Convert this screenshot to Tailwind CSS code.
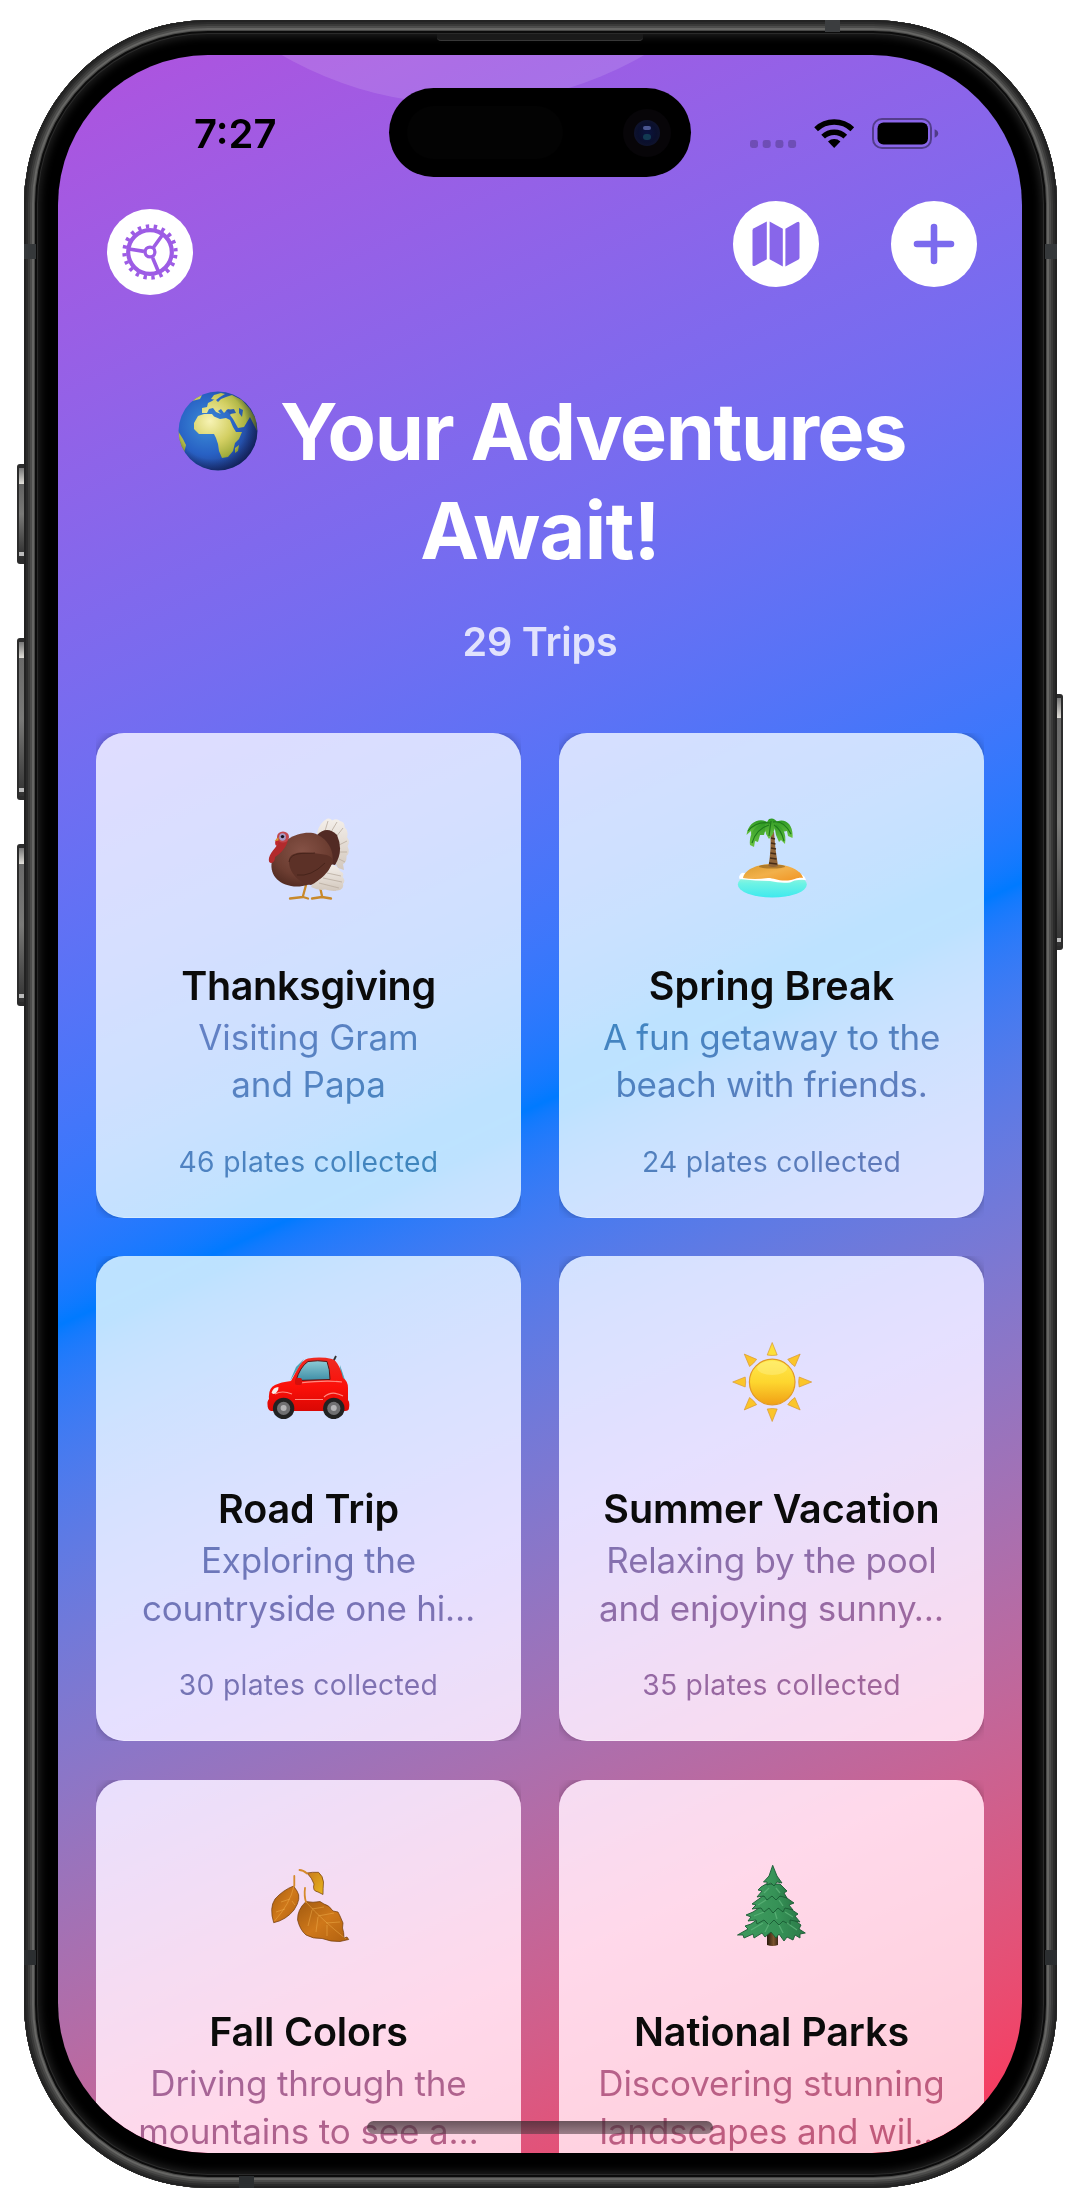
<!DOCTYPE html>
<html lang="en">
<head>
<meta charset="utf-8">
<title>Your Adventures Await!</title>
<script src="https://cdn.jsdelivr.net/npm/@tailwindcss/browser@4"></script>
</head>
<body class="bg-white font-['Inter',sans-serif] w-[1080px] h-[2208px] overflow-hidden">
<div class="relative ml-[24px] pt-[20px] w-[1033px]">

  <!-- side buttons -->
  <div class="absolute -left-[7px] top-[464px] w-[10px] h-[100px] rounded-l-[3px] bg-linear-to-b from-[#555] via-[#7a7a78] to-[#2a2a2a] border-l-2 border-y-4 border-[#2c2c2c]"><div class="h-4 w-[5px] bg-linear-to-b from-[#777] to-[#e2e0da]"></div><div class="mt-[68px] h-1 w-[5px] bg-[#bbb]"></div></div>
  <div class="absolute -left-[7px] top-[638px] w-[10px] h-[162px] rounded-l-[3px] bg-linear-to-b from-[#666] via-[#7a7a78] to-[#333] border-l-2 border-y-4 border-[#2c2c2c]"><div class="h-4 w-[5px] bg-linear-to-b from-[#777] to-[#e2e0da]"></div><div class="mt-[130px] h-1 w-[5px] bg-[#bbb]"></div></div>
  <div class="absolute -left-[7px] top-[844px] w-[10px] h-[162px] rounded-l-[3px] bg-linear-to-b from-[#666] via-[#7a7a78] to-[#333] border-l-2 border-y-4 border-[#2c2c2c]"><div class="h-4 w-[5px] bg-linear-to-b from-[#777] to-[#e2e0da]"></div><div class="mt-[130px] h-1 w-[5px] bg-[#bbb]"></div></div>
  <div class="absolute -right-[6px] top-[694px] w-[9px] h-[256px] rounded-r-[3px] bg-linear-to-b from-[#666] via-[#7a7a78] to-[#333] border-r-2 border-y-4 border-[#2c2c2c]"><div class="h-5 w-[5px] ml-[2px] bg-linear-to-b from-[#777] to-[#e2e0da]"></div><div class="mt-[220px] h-1 w-[5px] ml-[2px] bg-[#bbb]"></div></div>

  <!-- body -->
  <div class="relative w-[1033px] h-[2168px] rounded-[184px] bg-black pt-[35px] pl-[34px] shadow-[inset_0_0_0_2px_#222,inset_0_0_0_4px_#2b2b2b,inset_0_0_0_6px_#3a3a39,inset_0_0_0_8px_#4c4c4b,inset_0_0_0_10px_#666664,inset_0_0_0_11px_#484847,inset_0_0_0_13px_#0c0c0c,inset_0_0_0_14px_#2a2a2a,inset_0_0_8px_16px_#222]">
    <div class="absolute left-[801px] top-0 w-[15px] h-[12px] bg-[#3b3d3f]"></div>
    <div class="absolute left-[215px] bottom-0 w-[15px] h-[12px] bg-[#2b2e30]"></div>
    <div class="absolute left-0 top-[224px] w-[12px] h-[15px] bg-[#35383a]"></div>
    <div class="absolute right-0 top-[224px] w-[12px] h-[15px] bg-[#35383a]"></div>
    <div class="absolute left-0 top-[1930px] w-[12px] h-[15px] bg-[#2b2e30]"></div>
    <div class="absolute right-0 top-[1930px] w-[12px] h-[15px] bg-[#2b2e30]"></div>
    <div class="absolute left-[413px] top-[14px] w-[206px] h-[7px] rounded-b-[4px] bg-[#1a1a1a] border-b border-[#383838]"></div>

    <!-- screen -->
    <div class="relative w-[964px] h-[2098px] rounded-[150px] overflow-hidden bg-[linear-gradient(155.3deg_in_oklab,#af52de_0%,#007aff_50%,#ff2d55_100%)]">
      <div class="absolute left-[45px] -top-[671px] size-[720px] rounded-full bg-white/12"></div>

      <!-- Dynamic Island -->
      <div class="absolute left-[331px] top-[33px] w-[302px] h-[89px] rounded-full bg-black flex items-center justify-between pl-[18px] pr-[20px]">
        <div class="w-[156px] h-[53px] rounded-full bg-[#030303]"></div>
        <div class="size-[48px] rounded-full bg-[#070508] flex items-center justify-center">
          <div class="size-[26px] rounded-full bg-[radial-gradient(circle,#0b1440_0%,#0a0f2c_50%,#14182e_100%)] flex flex-col items-center justify-center gap-1"><div class="w-[8px] h-[4px] rounded-full bg-[#4a5690]"></div><div class="w-[8px] h-[6px] rounded-full bg-[#123a52]"></div></div>
        </div>
      </div>

      <!-- status bar -->
      <div class="relative flex justify-between items-start pt-[54px] h-[146px] pl-[136px] pr-[83px]">
        <div class="text-[40px] leading-[50px] font-semibold text-black">7:27</div>
        <svg class="mt-[9px]" width="189" height="31" viewBox="0 0 189 31">
          <g fill="#000" fill-opacity=".22"><rect x="0" y="22" width="8" height="8" rx="2.4"/><rect x="12.7" y="22" width="8" height="8" rx="2.4"/><rect x="25.4" y="22" width="8" height="8" rx="2.4"/><rect x="38.1" y="22" width="8" height="8" rx="2.4"/></g>
          <g transform="translate(64.2 0)"><path d="M20 30 13.8 23.6a9 9 0 0 1 12.4 0z"/><path fill="none" stroke="#000" stroke-width="5.4" d="M8.9 18.6a16.2 16.2 0 0 1 22.2 0M1.9 11.2a26.4 26.4 0 0 1 36.2 0"/></g>
          <rect x="123" y="1" width="58" height="29" rx="9" fill="none" stroke="#000" stroke-opacity=".4" stroke-width="2"/>
          <rect x="127.500" y="4.500" width="50.500" height="22" rx="6" fill="#000"/>
          <path d="M184.600 11.300c2 .6 3.600 2.200 3.600 4.200s-1.600 3.600-3.600 4.200z" fill="#000" fill-opacity=".42"/>
        </svg>
      </div>

      <!-- toolbar -->
      <div class="relative flex items-start h-[181px] pl-[49px] pr-[45px]">
        <button class="mt-[8px] size-[86px] rounded-full bg-white flex items-center justify-center">
          <svg width="60" height="60" viewBox="-30 -30 60 60" fill="none" stroke="#9d5ce5">
            <circle r="21.800" stroke-width="4.200"/>
            <circle r="25.600" stroke-width="4.200" stroke-dasharray="3.400 4.642" stroke-dashoffset="-3"/>
            <circle r="4.900" stroke-width="3.300"/>
            <path stroke-width="3.600" d="M3.600-4.800 13.500-18.500M-6-.6-21-3M2.600 5.700 8.600 20"/>
          </svg>
        </button>
        <button class="ml-auto size-[86px] rounded-full bg-white flex items-center justify-center">
          <svg width="48" height="46" viewBox="0 0 48 46" fill="#8866ea">
            <path d="M.5 9.600Q.5 8 1.900 7.200L14.800.5V38.300L3 44.800Q.5 45.800.5 43.600z"/>
            <path d="M17.600.5 30.800 7.800V45.500L17.600 38.300z"/>
            <path d="M33.400 7.800 44.800 1.200Q47.500 0 47.500 2.400V36.400Q47.500 38 46.100 38.800L33.400 45.500z"/>
          </svg>
        </button>
        <button class="ml-[72px] size-[86px] rounded-full bg-white flex items-center justify-center">
          <svg width="42" height="42" viewBox="0 0 42 42" stroke="#7b6aee" stroke-width="6.600" stroke-linecap="round"><path d="M21 4v34M4 21h34"/></svg>
        </button>
      </div>

      <!-- heading -->
      <h1 class="relative flex flex-col items-center text-white font-bold text-[79px] leading-[98.500px]">
        <span class="flex items-center gap-[22px] ml-[4px]">
          <svg width="80" height="80" viewBox="0 0 80 80">
            <defs>
              <radialGradient id="sea" cx=".36" cy=".42" r=".68"><stop offset="0" stop-color="#3c8ed8"/><stop offset=".55" stop-color="#2861c4"/><stop offset="1" stop-color="#20357f"/></radialGradient>
              <radialGradient id="land" gradientUnits="userSpaceOnUse" cx="32" cy="30" r="46"><stop offset="0" stop-color="#f7f3b4"/><stop offset=".5" stop-color="#d3cf62"/><stop offset="1" stop-color="#879a28"/></radialGradient>
              <radialGradient id="rim" cx=".42" cy=".42" r=".6"><stop offset=".72" stop-color="#0a1848" stop-opacity="0"/><stop offset="1" stop-color="#0a1440" stop-opacity=".6"/></radialGradient>
              <clipPath id="globe"><circle cx="40" cy="40" r="39.500"/></clipPath>
            </defs>
            <circle cx="40" cy="40" r="39.500" fill="url(#sea)"/>
            <g clip-path="url(#globe)">
              <g fill="url(#land)">
                <path d="M16 32 20 25 26 23 34 23 36 25.500 42 28 48 27 52 29 55 36 58 41 64 41 61 48 57 52 55 60 50 66 44 67 41 60 40 53 38 47 36 43 29 43 21 43 16 38z"/>
                <path d="M24 22 24 17 29 16 30 12 34 10 37 8 40 11 43 8 48 6 54 4 64 9 72 18 78 28 79 40 76 34 72 26 69 31 66 36 60 37 55 28 52 24 55 20 50 18 46 22 43 18 40 20 43 23 38 21 35 17 31 18 29 22z"/>
                <path d="M33 8 36 4 43 2 47 3 42 6 38 9zM14 10 18 6 24 4 22 8zM57 57 61 54 60 60 57 62zM0 40 5 48 8 54 6 62 1 54z"/>
              </g>
              <path d="M48 19 56 18 58 22 52 23zM61 17l4 2-1 7-3-4z" fill="#2b5cae"/>
              <circle cx="40" cy="40" r="39.500" fill="url(#rim)"/>
            </g>
          </svg>
          <span class="tracking-[-1.400px]">Your Adventures</span>
        </span>
        <span class="tracking-[-.7px]">Await!</span>
      </h1>
      <p class="relative mt-[39px] text-center text-[39.500px] leading-[48px] font-semibold tracking-[-.2px] text-white/80">29 Trips</p>

      <!-- trips -->
      <div class="relative mt-[67px] px-[38px] grid grid-cols-2 gap-x-[38px] gap-y-[38.300px] text-center whitespace-nowrap">

        <div class="h-[485px] overflow-hidden"><div class="h-full rounded-[28px] bg-white/74 backdrop-brightness-115 backdrop-saturate-125 border-b border-white/30 shadow-[0_0_10px_rgba(0,0,0,.3)] pt-[84px] flex flex-col items-center">
          <svg width="84" height="84" viewBox="0 0 84 84">
            <defs><radialGradient id="tb" cx=".5" cy=".35" r=".75"><stop offset="0" stop-color="#855246"/><stop offset=".6" stop-color="#6c3d31"/><stop offset="1" stop-color="#4a261d"/></radialGradient>
            <linearGradient id="tf" x1="0" y1="0" x2="0" y2="1"><stop offset="0" stop-color="#f4efea"/><stop offset="1" stop-color="#d3c8bd"/></linearGradient></defs>
            <g fill="none" stroke="#c8892c" stroke-width="2.300" stroke-linecap="round"><path d="M39 68 36 79M36 80 23 81.500M36 80l5 1.500M53 70l2 9M55 80l-10 1.500M55 80l9 1.500"/></g>
            <path fill="url(#tf)" d="M50 16Q52 6 60 1.700Q64 1 65 3.500Q70 1 73 4Q78 5 77.500 10Q82 14 80 20Q83.500 25 80.500 29Q83.500 36 79.500 39Q80 45 76 47L77 53 71 51Z"/>
            <path fill="none" stroke="#b9aca0" stroke-width=".8" d="M58 14 61 4M64 15l6-10M69 20l7-9M72 28l8-4M73 35l7 0M72 42l6 3"/>
            <path fill="url(#tf)" d="M44 70Q52 74 58 72.500Q66 75 73 73Q77 71 76 67Q79 63 75.500 60Q78 56 73 54Q72 50 64 47Q52 52 44 70z"/>
            <path fill="none" stroke="#b9aca0" stroke-width=".8" d="M52 66l20 5M56 61l19 4M60 56l14 3"/>
            <path fill="#522a24" d="M50 18Q60 8 70 18Q77 34 68 48L58 46z"/>
            <path fill="url(#tb)" d="M6 40C12 24 30 14 46 16C60 20 68 34 65 46C60 62 40 72 24 69C8 66 1 54 6 40z"/>
            <path fill="#5c3127" d="M22 44C22 34 36 35 46 36C56 38 66 36 66 46C62 50 62 54 58 56C54 62 48 66 44 68C32 66 22 56 22 44z"/>
            <path fill="none" stroke="#47241b" stroke-width="1" d="M22 45C24 34 38 37 48 36M30 58Q44 60 58 46"/>
            <path fill="#b22a2c" d="M11 22C12 30 4 33 2 41Q1 46 4.500 46Q8 45 8 40C14 36 20 30 21 22z"/>
            <ellipse cx="16" cy="20" rx="6" ry="5.600" fill="#c2474e"/><ellipse cx="15.500" cy="20" rx="3.400" ry="3.800" fill="#a79ac6"/><circle cx="15.500" cy="19.600" r="1.700" fill="#171320"/>
            <path fill="#c2272b" d="M11 20Q7 24 8.500 28Q10 30 11 27L12.500 23z"/><path fill="#d8a13a" d="M11.500 20 7.500 24 11.500 23.500z"/>
          </svg>
          <h2 class="mt-[60.500px] text-[39.500px] leading-[48px] font-semibold text-[#0b0b0b] tracking-[-.35px]">Thanksgiving</h2>
          <p class="mt-[4px] text-[35px] leading-[47.800px] tracking-[-.05px] bg-clip-text text-transparent bg-linear-to-br from-[#6680c5] to-[#4484bf]">Visiting Gram<br>and Papa</p>
          <p class="mt-[36px] text-[28.300px] leading-[34px] tracking-[.28px] bg-clip-text text-transparent bg-linear-to-r from-[#5082c2] to-[#3d86bd]">46 plates collected</p>
        </div></div>

        <div class="h-[485px] overflow-hidden"><div class="h-full rounded-[28px] bg-white/74 backdrop-brightness-115 backdrop-saturate-125 border-b border-white/30 shadow-[0_0_10px_rgba(0,0,0,.3)] pt-[84px] flex flex-col items-center">
          <svg width="84" height="84" viewBox="0 0 84 84">
            <defs><linearGradient id="wt" x1="0" y1="0" x2="0" y2="1"><stop offset="0" stop-color="#c8f5d4"/><stop offset=".45" stop-color="#6ff3e4"/><stop offset="1" stop-color="#3fe9ee"/></linearGradient>
            <linearGradient id="sd" x1="0" y1="0" x2="1" y2="1"><stop offset="0" stop-color="#d99a2e"/><stop offset=".5" stop-color="#f2b04a"/><stop offset="1" stop-color="#f29422"/></linearGradient>
            <linearGradient id="lf" x1="0" y1="0" x2="0" y2="1"><stop offset="0" stop-color="#2f9a25"/><stop offset="1" stop-color="#6cc443"/></linearGradient></defs>
            <ellipse cx="42.300" cy="67.500" rx="34.500" ry="13" fill="url(#wt)"/>
            <path fill="#fff" d="M9 60Q11 55 14 56L71 57Q75 59 76 63Q66 62 60 65.500Q50 66.500 40 64Q26 64 9.500 62z"/>
            <path fill="url(#sd)" d="M13 61C15 52 28 47 42 47C58 47 71 53 73 61C66 60 63 64 57 63.500C48 64 44 61 38 61Q24 63 13 61z"/>
            <ellipse cx="42" cy="49.500" rx="13" ry="2" fill="#8a5d1c" opacity=".6"/>
            <path fill="#8f6438" d="M40.300 15 44 15Q45 32 48 49Q43 51 38.500 49Q41.500 32 40.300 15z"/>
            <path fill="none" stroke="#472c15" stroke-width="1.300" d="M41 21l4 1M41 26l4.500 1M41 31l5 1M40.500 36l5.500 1M40 41l6.500 1M39 46l8 1"/>
            <g fill="url(#lf)"><path d="M40 7C32-1 18 4 16.500 18L21 14 21 18 25 13 33 16 40 12z"/><path d="M37 6C26 6 19 16 20 28L24 30 25 24 28 25 30 18 34 18z"/><path d="M43 7C52-1 64 5 62.500 21L58 19 57 14 52 15 46 12z"/><path d="M44 7C52 8 57 16 55 27L51 23 49 25 46 18z"/><path d="M39 2Q44 0 47 5L43 17 39 22 36 17 35 8z"/></g>
            <path fill="none" stroke="#1e7a1c" stroke-width="1.200" d="M40 6Q26 4 18 14M39 8Q26 12 22 26M43 5Q54 3 61 17M44 8Q51 12 54 24M41 4 39 19"/>
          </svg>
          <h2 class="mt-[60.500px] text-[39.500px] leading-[48px] font-semibold text-[#0b0b0b]">Spring Break</h2>
          <p class="mt-[4px] text-[35px] leading-[47.800px] tracking-[-.3px] bg-clip-text text-transparent bg-linear-to-br from-[#3c86c2] to-[#627bbd]">A fun getaway to the<br>beach with friends.</p>
          <p class="mt-[36px] text-[28.300px] leading-[34px] tracking-[.28px] bg-clip-text text-transparent bg-linear-to-r from-[#5080be] to-[#6079b9]">24 plates collected</p>
        </div></div>

        <div class="h-[485px] overflow-hidden"><div class="h-full rounded-[28px] bg-white/74 backdrop-brightness-115 backdrop-saturate-125 border-b border-white/30 shadow-[0_0_10px_rgba(0,0,0,.3)] pt-[84px] flex flex-col items-center">
          <svg class="-ml-[2px]" width="84" height="84" viewBox="0 0 84 84">
            <defs><linearGradient id="cr" x1="0" y1="0" x2="0" y2="1"><stop offset="0" stop-color="#ee2a22"/><stop offset=".55" stop-color="#fb1009"/><stop offset="1" stop-color="#d90804"/></linearGradient>
            <linearGradient id="gl" x1="0" y1="0" x2="0" y2="1"><stop offset="0" stop-color="#8ccbd6"/><stop offset="1" stop-color="#3f8ea6"/></linearGradient></defs>
            <path d="M67.500 21 70 16" stroke="#333" stroke-width="1.800"/>
            <path fill="#4aa3b4" d="M24 41 38 19 30 27zM74 25 79 40 75 40z"/>
            <path fill="url(#cr)" d="M25 41 31 30Q37 19 42 18.500Q55 16.500 66 19Q73 21 77 38Q82 41 82 48L82 60Q84 62 83 68Q83 71 79 71L5 71Q1 70 1.500 62Q2 60 3 59Q2 48 9 45Q15 42 25 41z"/>
            <path fill="url(#gl)" stroke="#5b1413" stroke-width="1" d="M30 40.500Q34 27 42 21.500Q52 20 61 21.500Q64 29 64 39.500z"/>
            <path fill="none" stroke="#ff8a80" stroke-width="1.200" d="M29 59.500H57M9 54Q16 50 26 54M58 57Q66 50 77 56M34 43Q60 40 76 42"/>
            <path fill="#f8efe8" d="M5.500 53Q7 47 12.500 47Q13 50 10 53Q7 55 6 53z"/>
            <rect x="29" y="38" width="7" height="7" rx="2" fill="#d50f0b"/>
            <g fill="#222"><circle cx="17.600" cy="68.400" r="10.700"/><circle cx="67.800" cy="68.400" r="10.700"/></g>
            <g fill="#707072"><circle cx="17.600" cy="68.400" r="6.600"/><circle cx="67.800" cy="68.400" r="6.600"/></g>
            <g fill="#b4b4b6"><circle cx="17.600" cy="68" r="3"/><circle cx="67.800" cy="68" r="3"/></g>
          </svg>
          <h2 class="mt-[60.500px] text-[39.500px] leading-[48px] font-semibold text-[#0b0b0b] tracking-[-.1px]">Road Trip</h2>
          <p class="mt-[4px] text-[35px] leading-[47.800px] tracking-[-.22px] bg-clip-text text-transparent bg-linear-to-br from-[#6479bd] to-[#8071b2]">Exploring the<br>countryside one hi…</p>
          <p class="mt-[36px] text-[28.300px] leading-[34px] tracking-[.28px] bg-clip-text text-transparent bg-linear-to-r from-[#7474b5] to-[#8270b0]">30 plates collected</p>
        </div></div>

        <div class="h-[485px] overflow-hidden"><div class="h-full rounded-[28px] bg-white/74 backdrop-brightness-115 backdrop-saturate-125 border-b border-white/30 shadow-[0_0_10px_rgba(0,0,0,.3)] pt-[84px] flex flex-col items-center">
          <svg width="84" height="84" viewBox="0 0 84 84">
            <defs><linearGradient id="sn" x1="0" y1="0" x2="0" y2="1"><stop offset="0" stop-color="#ffe94e"/><stop offset=".5" stop-color="#fdd62f"/><stop offset="1" stop-color="#f1a015"/></linearGradient></defs>
            <g fill="#fbc52a" stroke="#d99a35" stroke-width=".7" transform="translate(42.200 42)">
              <path d="M0-39.500 5-27Q0-26-5-27z" fill="#fde03a"/>
              <path d="M0-39.500 5-27Q0-26-5-27z" transform="rotate(45)"/><path d="M0-39.500 5-27Q0-26-5-27z" transform="rotate(90)"/><path d="M0-39.500 5-27Q0-26-5-27z" transform="rotate(135)"/><path d="M0-39.500 5-27Q0-26-5-27z" transform="rotate(180)"/><path d="M0-39.500 5-27Q0-26-5-27z" transform="rotate(225)"/><path d="M0-39.500 5-27Q0-26-5-27z" transform="rotate(270)"/><path d="M0-39.500 5-27Q0-26-5-27z" transform="rotate(315)"/>
            </g>
            <circle cx="42.200" cy="42" r="22.800" fill="url(#sn)" stroke="#e29a25" stroke-width="1.200"/>
            <ellipse cx="42.200" cy="28" rx="15" ry="7" fill="#fff6a0" opacity=".35"/>
          </svg>
          <h2 class="mt-[60.500px] text-[39.500px] leading-[48px] font-semibold text-[#0b0b0b] tracking-[-.1px]">Summer Vacation</h2>
          <p class="mt-[4px] text-[35px] leading-[47.800px] tracking-[-.22px] bg-clip-text text-transparent bg-linear-to-br from-[#8072b2] to-[#a0669c]">Relaxing by the pool<br>and enjoying sunny…</p>
          <p class="mt-[36px] text-[28.300px] leading-[34px] tracking-[.28px] bg-clip-text text-transparent bg-linear-to-r from-[#9469a4] to-[#a0659a]">35 plates collected</p>
        </div></div>

        <div class="h-[485px] overflow-hidden"><div class="h-full rounded-[28px] bg-white/74 backdrop-brightness-115 backdrop-saturate-125 border-b border-white/30 shadow-[0_0_10px_rgba(0,0,0,.3)] pt-[84px] flex flex-col items-center">
          <svg class="-ml-[2px]" width="84" height="84" viewBox="0 0 84 84">
            <defs><linearGradient id="la" x1="0" y1="0" x2="1" y2="1"><stop offset="0" stop-color="#a05a10"/><stop offset=".5" stop-color="#cf781a"/><stop offset="1" stop-color="#b0600f"/></linearGradient>
            <linearGradient id="lc" x1="0" y1="0" x2="1" y2="1"><stop offset="0" stop-color="#c7791c"/><stop offset="1" stop-color="#e9b61c"/></linearGradient></defs>
            <g stroke="#6e3a08" stroke-width=".7">
              <path fill="url(#la)" d="M27.600 22Q17 26 9 35Q3 44 7.700 58.700Q20 56 28 46Q36 34 31 27z"/>
              <path fill="url(#la)" d="M40 37.500Q31 46 31.600 56Q34 66 40 71Q47 75 56 74.500Q65 78 74 77.500L82.700 75.500 81 73 78 74Q78 68 76.500 64L77 59 74 52 72 48 67 47Q63 41 58 40L54 37.500Q47 39 40 37.500z"/>
              <path fill="url(#lc)" d="M41 9Q46 8 52.500 8.300Q57 12 57.500 18Q57 25 57 30.500L52 28Q46 27 48 20Q46 14 41 9z"/>
            </g>
            <g fill="none" stroke="#d58a2c" stroke-width="1.800" stroke-linecap="round"><path d="M28.300 12V22M39 24Q38 32 40 38M33.500 6Q37 6 41 9.500"/></g>
            <g fill="none" stroke="#f0b04e" stroke-width=".8" opacity=".6"><path d="M28 22Q24 40 8.500 57M24 35 15 38M26 37l3 4M19 45l-9 3M40 38Q56 56 80 75M46 45 58 43M52 52l16-3M60 59l14-1M46 46 42 62M52 53 50 68M61 61 61 72"/></g>
          </svg>
          <h2 class="mt-[60.500px] text-[39.500px] leading-[48px] font-semibold text-[#0b0b0b] tracking-[-.2px]">Fall Colors</h2>
          <p class="mt-[4px] text-[35px] leading-[47.800px] tracking-[-.12px] bg-clip-text text-transparent bg-linear-to-br from-[#a0669c] to-[#b85f84]">Driving through the<br>mountains to see a…</p>
        </div></div>

        <div class="h-[485px] overflow-hidden"><div class="h-full rounded-[28px] bg-white/74 backdrop-brightness-115 backdrop-saturate-125 border-b border-white/30 shadow-[0_0_10px_rgba(0,0,0,.3)] pt-[84px] flex flex-col items-center">
          <svg class="-ml-[2px]" width="84" height="84" viewBox="0 0 84 84">
            <defs><linearGradient id="tr" x1="0" y1="0" x2="1" y2="0"><stop offset="0" stop-color="#3f9a5e"/><stop offset=".6" stop-color="#369257"/><stop offset="1" stop-color="#2b7a48"/></linearGradient>
            <linearGradient id="tk" x1="0" y1="0" x2="1" y2="0"><stop offset="0" stop-color="#2a190c"/><stop offset=".6" stop-color="#7b542e"/><stop offset="1" stop-color="#3e2815"/></linearGradient></defs>
            <path fill="url(#tk)" d="M38 68H49V81Q43.500 83 38 81z"/>
            <g fill="url(#tr)" stroke="#195a33" stroke-width=".9" stroke-linejoin="round">
              <path d="M32 53 22 60 16 62 19 65 8.500 71 14 71 15 74 24 70 25 74 33 69 36 73 42 68 47 74 50 70 55 77 58 73 64 76 66 71 71 74 71 70 76.300 69 70 65 72 61 60 52z"/>
              <path d="M33 42 24 48 17 51 22 53 19 57 27 56 28 60 35 56 40 61 45 56 50 61 54 57 61 61 61 56 71 58 66 52 69 50 56 41z"/>
              <path d="M34 32 27 37 23 40 27 41 23 45 32 44 35 48 40 44 44 49 49 44 54 48 56 44 64 46 60 41 65 39 55 32z"/>
              <path d="M37 20 32 23 29 26 33 27 28 33 35 32 38 36 43 32 47 36 51 32 58 34 55 29 58 27 51 20z"/>
              <path d="M43.700 1.300 40 12 34.500 18 38 18 38 21 42 19 45 22 48 18 53 19 48 12z"/>
            </g>
            <g fill="none" stroke="#62b87e" stroke-width="1.300" opacity=".7"><path d="M34 59 22 66M40 60 36 68M50 61l4 8M58 59l10 7M35 48 25 52M46 48l2 7M56 48l8 5M37 36l-8 5M50 36l4 6M40 24l-5 5M47 24l4 5"/></g>
          </svg>
          <h2 class="mt-[60.500px] text-[39.500px] leading-[48px] font-semibold text-[#0b0b0b] tracking-[-.1px]">National Parks</h2>
          <p class="mt-[4px] text-[35px] leading-[47.800px] tracking-[-.12px] bg-clip-text text-transparent bg-linear-to-br from-[#b5628c] to-[#c45876]">Discovering stunning<br>landscapes and wil…</p>
        </div></div>
      </div>

      <!-- home indicator -->
      <div class="absolute left-[309px] top-[2066px] w-[346px] h-[13px] rounded-full bg-linear-to-b from-[#3a2a30]/75 to-[#4a3a40]/55"></div>
    </div>
  </div>
</div>
</body>
</html>
